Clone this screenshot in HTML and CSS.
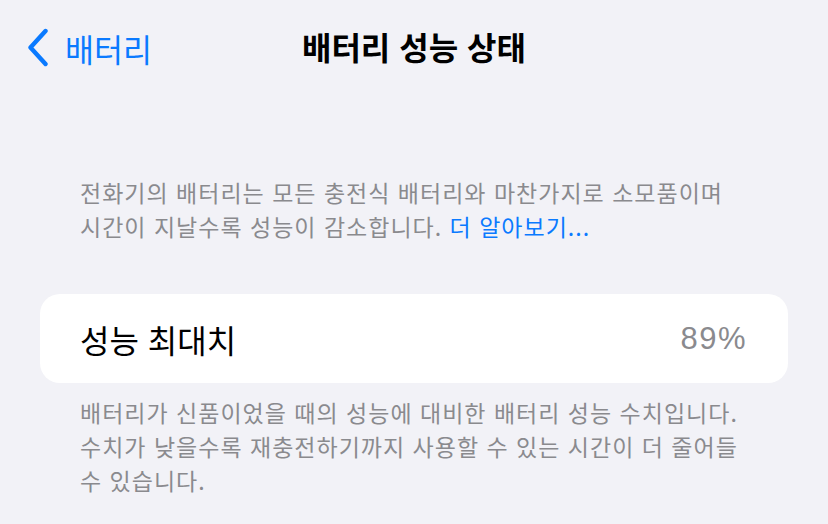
FILE: index.html
```html
<!DOCTYPE html>
<html lang="ko">
<head>
<meta charset="utf-8">
<link rel="stylesheet" href="styles.css">
</head>
<body>
<div class="screen">
  <header class="nav">
    <a class="back">
      <svg class="chev" width="24" height="40" viewBox="0 0 24 40"><path d="M19.5 3 L4.5 19.5 L19.5 36" fill="none" stroke="#0a7aff" stroke-width="4.4" stroke-linecap="round" stroke-linejoin="round"/></svg>
      <span class="back-label">배터리</span>
    </a>
    <h1 class="title">배터리 성능 상태</h1>
  </header>
  <p class="note intro">전화기의 배터리는 모든 충전식 배터리와 마찬가지로 소모품이며<br>시간이 지날수록 성능이 감소합니다. <span class="link">더 알아보기...</span></p>
  <div class="card">
    <span class="label">성능 최대치</span>
    <span class="value">89%</span>
  </div>
  <p class="note foot">배터리가 신품이었을 때의 성능에 대비한 배터리 성능 수치입니다.<br>수치가 낮을수록 재충전하기까지 사용할 수 있는 시간이 더 줄어들<br>수 있습니다.</p>
</div>
</body>
</html>
```
FILE: styles.css
```css
html, body { margin: 0; padding: 0; }
body {
  background: #f2f2f7;
  font-family: "Noto Sans CJK KR", "Noto Sans", sans-serif;
  width: 828px;
  height: 524px;
  overflow: hidden;
}
.screen { padding: 0 40px; }
.nav {
  position: relative;
  height: 96px;
  display: flex;
  align-items: center;
  justify-content: center;
}
.back {
  position: absolute;
  left: -14px;
  top: 28px;
  display: flex;
  align-items: center;
  gap: 15px;
  color: #0a7aff;
}
.back-label { font-size: 31.5px; line-height: 40px; }
.title {
  margin: 0;
  font-size: 32px;
  font-weight: 700;
  color: #000;
  line-height: 40px;
  position: relative;
  top: -2px;
}
.note {
  margin: 0;
  padding: 0 40px;
  font-size: 23px;
  letter-spacing: 1px;
  line-height: 34px;
  color: #8a8a8e;
  white-space: nowrap;
}
.intro { margin-top: 79px; }
.link { color: #0a7aff; }
.card {
  margin-top: 51px;
  height: 89px;
  background: #fff;
  border-radius: 20px;
  display: flex;
  align-items: center;
  justify-content: space-between;
  padding: 0 41px 0 40px;
}
.label { font-size: 32px; color: #000; }
.value { font-size: 31px; letter-spacing: 1.5px; color: #8a8a8e; font-family: "Liberation Sans", sans-serif; }
.foot { margin-top: 12px; }
```
